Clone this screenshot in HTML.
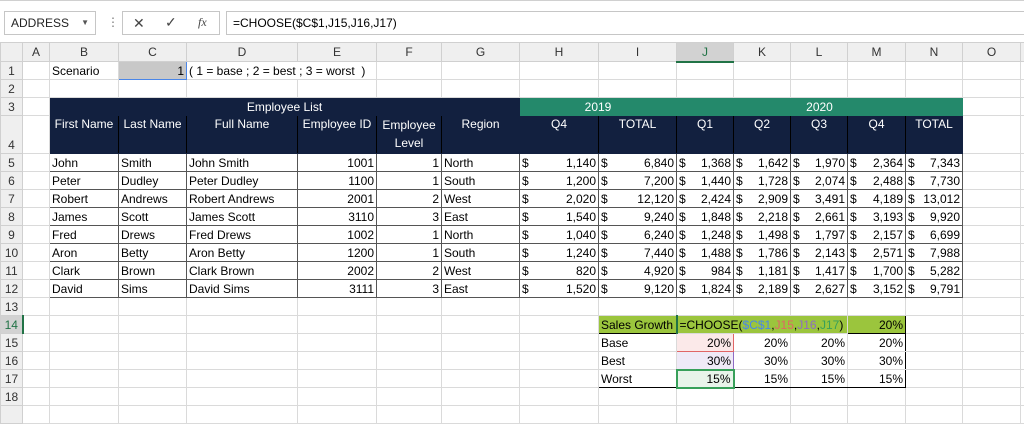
<!DOCTYPE html>
<html><head><meta charset="utf-8">
<style>
*{margin:0;padding:0;box-sizing:border-box}
body{width:1024px;height:408px;overflow:hidden;background:#fff;font-family:"Liberation Sans",Arial,sans-serif;font-size:12px;color:#000;position:relative}
.top{position:absolute;left:0;top:0;width:1024px;height:42px;background:#fff;border-top:1px solid #d0d0d0}
.nb{position:absolute;left:4px;top:10px;width:92px;height:24px;border:1px solid #c6c6c6;font-size:12px;line-height:22px;padding-left:6px;color:#222}
.nb span{position:absolute;right:6px;top:0;font-size:8px;color:#555}
.ic{position:absolute;top:10px;height:24px;border:1px solid #c6c6c6;left:122px;width:98px}
.fx{position:absolute;left:226px;top:10px;width:800px;height:24px;border:1px solid #c6c6c6;line-height:22px;padding-left:6px;font-size:12px}
table{position:absolute;left:0;top:42px;border-collapse:collapse;table-layout:fixed;width:1024px}
td{border:1px solid #dadada;white-space:nowrap;overflow:visible;padding:0 2px;height:18px;line-height:16px;vertical-align:bottom}
tr.h td{background:#efefef;color:#333;text-align:center;height:19px;vertical-align:middle;border-color:#d0d0d0}
td.rh{background:#efefef;color:#333;text-align:center;padding:0;border-color:#d0d0d0}
.r{text-align:right}.c{text-align:center}
.nv{background:#12203f;color:#fff;border-color:#12203f}
.gr{background:#24896b;color:#fff;border-color:#24896b;text-align:center}
.d td.b{border:1px solid #555}
.dl{display:flex;justify-content:space-between}
.sg{background:#9bc53d}
</style></head><body>
<div class="top">
<div class="nb">ADDRESS<span>▼</span></div>
<div style="position:absolute;left:107px;top:14px;color:#777;font-size:12px">⋮</div>
<div class="ic"><span style="position:absolute;left:10px;top:3px;font-size:14px;color:#444">✕</span><span style="position:absolute;left:42px;top:2px;font-size:14px;color:#444">✓</span><span style="position:absolute;left:75px;top:3px;font-size:12px;font-style:italic;font-family:'Liberation Serif',serif;color:#444">fx</span></div>
<div class="fx">=CHOOSE($C$1,J15,J16,J17)</div>
</div>
<table>
<colgroup><col style="width:22px"><col style="width:27px"><col style="width:69px"><col style="width:68px"><col style="width:111px"><col style="width:79px"><col style="width:65px"><col style="width:78px"><col style="width:79px"><col style="width:78px"><col style="width:57px"><col style="width:57px"><col style="width:57px"><col style="width:58px"><col style="width:57px"><col style="width:58px"><col style="width:4px"></colgroup>
<tr class="h"><td></td><td>A</td><td>B</td><td>C</td><td>D</td><td>E</td><td>F</td><td>G</td><td>H</td><td>I</td><td style="background:#d2d2d2;border-bottom:2px solid #217346;color:#217346">J</td><td>K</td><td>L</td><td>M</td><td>N</td><td>O</td><td></td></tr>
<tr><td class="rh">1</td><td></td><td>Scenario</td><td class="r" style="background:#c8c8c8;border:1px solid #4a86e8">1</td><td colspan="2">( 1 = base ; 2 = best ; 3 = worst &nbsp;)</td><td></td><td></td><td></td><td></td><td></td><td></td><td></td><td></td><td></td><td></td><td></td></tr>
<tr><td class="rh" style="height:17px">2</td><td></td><td></td><td></td><td></td><td></td><td></td><td></td><td></td><td></td><td></td><td></td><td></td><td></td><td></td><td></td><td></td></tr>
<tr><td class="rh">3</td><td></td><td class="nv c" colspan="6">Employee List</td><td class="gr" colspan="2">2019</td><td class="gr" colspan="5" style="border-left:1px solid #000">2020</td><td></td><td></td></tr>
<tr style="height:38px"><td class="rh" style="vertical-align:bottom">4</td><td></td>
<td class="nv c" style="vertical-align:top;border-right:1px solid #000">First Name</td>
<td class="nv c" style="vertical-align:top;border-right:1px solid #000">Last Name</td>
<td class="nv c" style="vertical-align:top;border-right:1px solid #000">Full Name</td>
<td class="nv c" style="vertical-align:top;border-right:1px solid #000">Employee ID</td>
<td class="nv c" style="vertical-align:top;white-space:normal;line-height:18px;border-right:1px solid #000">Employee Level</td>
<td class="nv c" style="vertical-align:top">Region</td>
<td class="nv c" style="vertical-align:top;border-right:1px solid #000">Q4</td>
<td class="nv c" style="vertical-align:top;border-right:1px solid #000">TOTAL</td>
<td class="nv c" style="vertical-align:top;border-right:1px solid #000">Q1</td>
<td class="nv c" style="vertical-align:top;border-right:1px solid #000">Q2</td>
<td class="nv c" style="vertical-align:top;border-right:1px solid #000">Q3</td>
<td class="nv c" style="vertical-align:top;border-right:1px solid #000">Q4</td>
<td class="nv c" style="vertical-align:top">TOTAL</td><td></td><td></td></tr>
<tr class="d"><td class="rh">5</td><td></td><td class="b">John</td><td class="b">Smith</td><td class="b">John Smith</td><td class="b r">1001</td><td class="b r">1</td><td class="b">North</td><td class="b"><div class="dl"><span>$</span><span>1,140</span></div></td><td class="b"><div class="dl"><span>$</span><span>6,840</span></div></td><td class="b"><div class="dl"><span>$</span><span>1,368</span></div></td><td class="b"><div class="dl"><span>$</span><span>1,642</span></div></td><td class="b"><div class="dl"><span>$</span><span>1,970</span></div></td><td class="b"><div class="dl"><span>$</span><span>2,364</span></div></td><td class="b"><div class="dl"><span>$</span><span>7,343</span></div></td><td></td><td></td></tr>
<tr class="d"><td class="rh">6</td><td></td><td class="b">Peter</td><td class="b">Dudley</td><td class="b">Peter Dudley</td><td class="b r">1100</td><td class="b r">1</td><td class="b">South</td><td class="b"><div class="dl"><span>$</span><span>1,200</span></div></td><td class="b"><div class="dl"><span>$</span><span>7,200</span></div></td><td class="b"><div class="dl"><span>$</span><span>1,440</span></div></td><td class="b"><div class="dl"><span>$</span><span>1,728</span></div></td><td class="b"><div class="dl"><span>$</span><span>2,074</span></div></td><td class="b"><div class="dl"><span>$</span><span>2,488</span></div></td><td class="b"><div class="dl"><span>$</span><span>7,730</span></div></td><td></td><td></td></tr>
<tr class="d"><td class="rh">7</td><td></td><td class="b">Robert</td><td class="b">Andrews</td><td class="b">Robert Andrews</td><td class="b r">2001</td><td class="b r">2</td><td class="b">West</td><td class="b"><div class="dl"><span>$</span><span>2,020</span></div></td><td class="b"><div class="dl"><span>$</span><span>12,120</span></div></td><td class="b"><div class="dl"><span>$</span><span>2,424</span></div></td><td class="b"><div class="dl"><span>$</span><span>2,909</span></div></td><td class="b"><div class="dl"><span>$</span><span>3,491</span></div></td><td class="b"><div class="dl"><span>$</span><span>4,189</span></div></td><td class="b"><div class="dl"><span>$</span><span>13,012</span></div></td><td></td><td></td></tr>
<tr class="d"><td class="rh">8</td><td></td><td class="b">James</td><td class="b">Scott</td><td class="b">James Scott</td><td class="b r">3110</td><td class="b r">3</td><td class="b">East</td><td class="b"><div class="dl"><span>$</span><span>1,540</span></div></td><td class="b"><div class="dl"><span>$</span><span>9,240</span></div></td><td class="b"><div class="dl"><span>$</span><span>1,848</span></div></td><td class="b"><div class="dl"><span>$</span><span>2,218</span></div></td><td class="b"><div class="dl"><span>$</span><span>2,661</span></div></td><td class="b"><div class="dl"><span>$</span><span>3,193</span></div></td><td class="b"><div class="dl"><span>$</span><span>9,920</span></div></td><td></td><td></td></tr>
<tr class="d"><td class="rh">9</td><td></td><td class="b">Fred</td><td class="b">Drews</td><td class="b">Fred Drews</td><td class="b r">1002</td><td class="b r">1</td><td class="b">North</td><td class="b"><div class="dl"><span>$</span><span>1,040</span></div></td><td class="b"><div class="dl"><span>$</span><span>6,240</span></div></td><td class="b"><div class="dl"><span>$</span><span>1,248</span></div></td><td class="b"><div class="dl"><span>$</span><span>1,498</span></div></td><td class="b"><div class="dl"><span>$</span><span>1,797</span></div></td><td class="b"><div class="dl"><span>$</span><span>2,157</span></div></td><td class="b"><div class="dl"><span>$</span><span>6,699</span></div></td><td></td><td></td></tr>
<tr class="d"><td class="rh">10</td><td></td><td class="b">Aron</td><td class="b">Betty</td><td class="b">Aron Betty</td><td class="b r">1200</td><td class="b r">1</td><td class="b">South</td><td class="b"><div class="dl"><span>$</span><span>1,240</span></div></td><td class="b"><div class="dl"><span>$</span><span>7,440</span></div></td><td class="b"><div class="dl"><span>$</span><span>1,488</span></div></td><td class="b"><div class="dl"><span>$</span><span>1,786</span></div></td><td class="b"><div class="dl"><span>$</span><span>2,143</span></div></td><td class="b"><div class="dl"><span>$</span><span>2,571</span></div></td><td class="b"><div class="dl"><span>$</span><span>7,988</span></div></td><td></td><td></td></tr>
<tr class="d"><td class="rh">11</td><td></td><td class="b">Clark</td><td class="b">Brown</td><td class="b">Clark Brown</td><td class="b r">2002</td><td class="b r">2</td><td class="b">West</td><td class="b"><div class="dl"><span>$</span><span>820</span></div></td><td class="b"><div class="dl"><span>$</span><span>4,920</span></div></td><td class="b"><div class="dl"><span>$</span><span>984</span></div></td><td class="b"><div class="dl"><span>$</span><span>1,181</span></div></td><td class="b"><div class="dl"><span>$</span><span>1,417</span></div></td><td class="b"><div class="dl"><span>$</span><span>1,700</span></div></td><td class="b"><div class="dl"><span>$</span><span>5,282</span></div></td><td></td><td></td></tr>
<tr class="d"><td class="rh">12</td><td></td><td class="b">David</td><td class="b">Sims</td><td class="b">David Sims</td><td class="b r">3111</td><td class="b r">3</td><td class="b">East</td><td class="b"><div class="dl"><span>$</span><span>1,520</span></div></td><td class="b"><div class="dl"><span>$</span><span>9,120</span></div></td><td class="b"><div class="dl"><span>$</span><span>1,824</span></div></td><td class="b"><div class="dl"><span>$</span><span>2,189</span></div></td><td class="b"><div class="dl"><span>$</span><span>2,627</span></div></td><td class="b"><div class="dl"><span>$</span><span>3,152</span></div></td><td class="b"><div class="dl"><span>$</span><span>9,791</span></div></td><td></td><td></td></tr>
<tr><td class="rh">13</td><td></td><td></td><td></td><td></td><td></td><td></td><td></td><td></td><td></td><td></td><td></td><td></td><td></td><td></td><td></td><td></td></tr>
<tr><td class="rh" style="background:#d2d2d2;color:#217346;border-right:2px solid #217346">14</td><td></td><td></td><td></td><td></td><td></td><td></td><td></td><td></td>
<td class="sg" style="border:1px solid #000;border-right-color:#9bc53d">Sales Growth</td>
<td class="sg" colspan="3" style="border-top:1px solid #000;border-left:2px solid #217346;overflow:visible">=CHOOSE(<span style="color:#4a86e8">$C$1</span>,<span style="color:#e06666">J15</span>,<span style="color:#8e6cc4">J16</span>,<span style="color:#38a05a">J17</span>)</td>
<td class="sg r" style="border:1px solid #000;border-left-color:#9bc53d">20%</td><td></td><td></td><td></td></tr>
<tr><td class="rh">15</td><td></td><td></td><td></td><td></td><td></td><td></td><td></td><td></td><td style="border-left:1px solid #000">Base</td><td class="r" style="background:#fbe9e9;border:1px solid #e06666">20%</td><td class="r">20%</td><td class="r">20%</td><td class="r" style="border-right:1px solid #000">20%</td><td></td><td></td><td></td></tr>
<tr><td class="rh">16</td><td></td><td></td><td></td><td></td><td></td><td></td><td></td><td></td><td style="border-left:1px solid #000">Best</td><td class="r" style="background:#efeaf7;border:1px solid #8e6cc4">30%</td><td class="r">30%</td><td class="r">30%</td><td class="r" style="border-right:1px solid #000">30%</td><td></td><td></td><td></td></tr>
<tr><td class="rh">17</td><td></td><td></td><td></td><td></td><td></td><td></td><td></td><td></td><td style="border-left:1px solid #000;border-bottom:1px solid #000">Worst</td><td class="r" style="background:#e8f4ea;border:2px solid #38a05a">15%</td><td class="r" style="border-bottom:1px solid #000">15%</td><td class="r" style="border-bottom:1px solid #000">15%</td><td class="r" style="border-right:1px solid #000;border-bottom:1px solid #000">15%</td><td></td><td></td><td></td></tr>
<tr><td class="rh">18</td><td></td><td></td><td></td><td></td><td></td><td></td><td></td><td></td><td></td><td></td><td></td><td></td><td></td><td></td><td></td><td></td></tr>
<tr><td class="rh"></td><td></td><td></td><td></td><td></td><td></td><td></td><td></td><td></td><td></td><td></td><td></td><td></td><td></td><td></td><td></td><td></td></tr>
</table>
</body></html>
